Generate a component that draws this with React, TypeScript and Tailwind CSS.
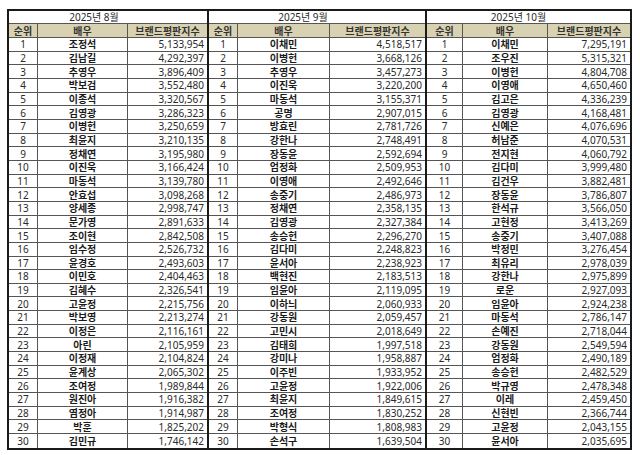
import React from 'react';

type Row = [string, string];

const aug: Row[] = [
  ['조정석', '5,133,954'], ['김남길', '4,292,397'], ['추영우', '3,896,409'], ['박보검', '3,552,480'],
  ['이종석', '3,320,567'], ['김영광', '3,286,323'], ['이병헌', '3,250,659'], ['최윤지', '3,210,135'],
  ['정채연', '3,195,980'], ['이진욱', '3,166,424'], ['마동석', '3,139,780'], ['안효섭', '3,098,268'],
  ['양세종', '2,998,747'], ['문가영', '2,891,633'], ['조이현', '2,842,508'], ['임수정', '2,526,732'],
  ['윤경호', '2,493,603'], ['이민호', '2,404,463'], ['김혜수', '2,326,541'], ['고윤정', '2,215,756'],
  ['박보영', '2,213,274'], ['이정은', '2,116,161'], ['아린', '2,105,959'], ['이정재', '2,104,824'],
  ['윤계상', '2,065,302'], ['조여정', '1,989,844'], ['원진아', '1,916,382'], ['염정아', '1,914,987'],
  ['박훈', '1,825,202'], ['김민규', '1,746,142'],
];

const sep: Row[] = [
  ['이채민', '4,518,517'], ['이병헌', '3,668,126'], ['추영우', '3,457,273'], ['이진욱', '3,220,200'],
  ['마동석', '3,155,371'], ['공명', '2,907,015'], ['방효린', '2,781,726'], ['강한나', '2,748,491'],
  ['장동윤', '2,592,694'], ['엄정화', '2,509,953'], ['이영애', '2,492,646'], ['송중기', '2,486,973'],
  ['정채연', '2,358,135'], ['김영광', '2,327,384'], ['송승헌', '2,296,270'], ['김다미', '2,248,823'],
  ['윤서아', '2,238,923'], ['백현진', '2,183,513'], ['임윤아', '2,119,095'], ['이하늬', '2,060,933'],
  ['강동원', '2,059,457'], ['고민시', '2,018,649'], ['김태희', '1,997,518'], ['강미나', '1,958,887'],
  ['이주빈', '1,933,952'], ['고윤정', '1,922,006'], ['최윤지', '1,849,615'], ['조여정', '1,830,252'],
  ['박형식', '1,808,983'], ['손석구', '1,639,504'],
];

const oct: Row[] = [
  ['이채민', '7,295,191'], ['조우진', '5,315,321'], ['이병헌', '4,804,708'], ['이영애', '4,650,460'],
  ['김고은', '4,336,239'], ['김영광', '4,168,481'], ['신예은', '4,076,696'], ['허남준', '4,070,531'],
  ['전지현', '4,060,792'], ['김다미', '3,999,480'], ['김건우', '3,882,481'], ['장동윤', '3,786,807'],
  ['한석규', '3,566,050'], ['고현정', '3,413,269'], ['송중기', '3,407,088'], ['박정민', '3,276,454'],
  ['최유리', '2,978,039'], ['강한나', '2,975,899'], ['로운', '2,927,093'], ['임윤아', '2,924,238'],
  ['마동석', '2,786,147'], ['손예진', '2,718,044'], ['강동원', '2,549,594'], ['엄정화', '2,490,189'],
  ['송승헌', '2,482,529'], ['박규영', '2,478,348'], ['이레', '2,459,450'], ['신현빈', '2,366,744'],
  ['고윤정', '2,043,155'], ['윤서아', '2,035,695'],
];

type SectionProps = {
  title: string;
  rows: Row[];
  outer: string;
  rankW: string;
  nameW: string;
  titlePad: string;
};

function Section({ title, rows, outer, rankW, nameW, titlePad }: SectionProps) {
  return (
    <div className={`flex flex-col border-2 border-[#1a1a1a] ${outer}`}>
      <div className={`h-[13px] flex items-center justify-center border-b border-[#555] ${titlePad}`}>
        {title}
      </div>
      <div className="h-[14px] flex bg-[#d8d2b2] border-b border-[#555] font-semibold text-[#333]">
        <div className={`${rankW} flex items-center justify-center border-r border-[#555]`}>순위</div>
        <div className={`${nameW} flex items-center justify-center border-r border-[#555]`}>배우</div>
        <div className="flex-1 flex items-center justify-center">브랜드평판지수</div>
      </div>
      {rows.map(([name, score], i) => (
        <div
          key={i}
          className={`h-[13.67px] flex ${i < rows.length - 1 ? 'border-b border-[#555]' : ''}`}
        >
          <div className={`${rankW} flex items-center justify-center border-r border-[#555]`}>{i + 1}</div>
          <div className={`${nameW} flex items-center justify-center border-r border-[#555] font-bold text-[#1a1a1a]`}>
            {name}
          </div>
          <div className="flex-1 flex items-center justify-end pr-[3px]">{score}</div>
        </div>
      ))}
    </div>
  );
}

export default function App() {
  return (
    <div
      className="w-[640px] h-[455px] bg-white pt-[9px] pl-[7px] text-[10px] leading-none text-[#2a2a2a]"
      style={{ fontFamily: '"Noto Sans", "Noto Sans CJK KR", sans-serif' }}
    >
      <div className="flex">
        <Section title="2025년 8월" rows={aug} outer="w-[202px]" rankW="w-[29px]" nameW="w-[90px]" titlePad="pr-[28px]" />
        <Section title="2025년 9월" rows={sep} outer="w-[218px] border-l-0" rankW="w-[29px]" nameW="w-[92px]" titlePad="pr-[28px]" />
        <Section title="2025년 10월" rows={oct} outer="w-[205px] border-l-0" rankW="w-[36px]" nameW="w-[85px]" titlePad="pr-[20px]" />
      </div>
    </div>
  );
}
